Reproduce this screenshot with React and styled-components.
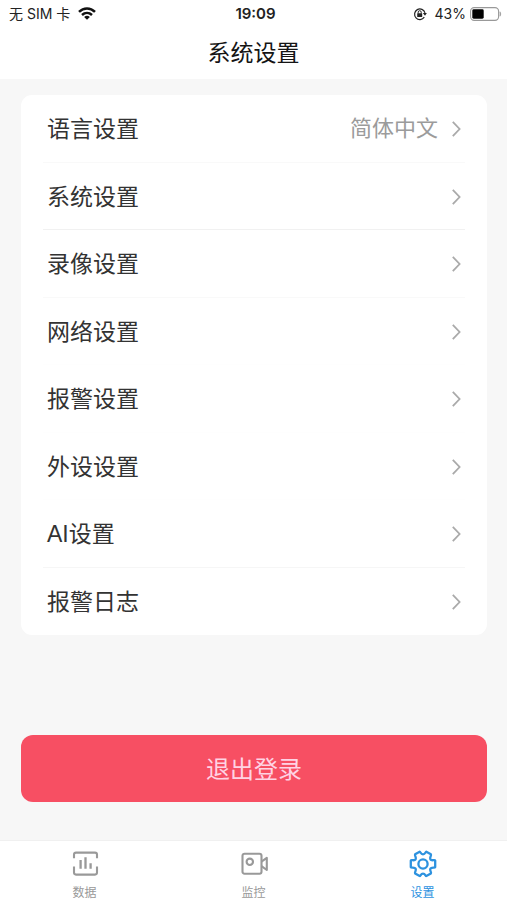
import React from "react";
import styled, { createGlobalStyle } from "styled-components";

const Global = createGlobalStyle`
  *, *::before, *::after { box-sizing: border-box; }
  body {
    margin: 0;
    background: #f7f7f7;
    font-family: Inter, "Noto Sans CJK SC", sans-serif;
    color: #333;
  }
  button, a { font: inherit; color: inherit; }
`;

const Screen = styled.div`
  display: flex;
  flex-direction: column;
  min-height: 100vh;
`;

const Header = styled.header`
  background: #fff;
`;

const StatusBar = styled.div`
  display: grid;
  grid-template-columns: 1fr auto 1fr;
  align-items: center;
  height: 27px;
  padding: 0 5px 0 9px;
  font-size: 14px;
  line-height: 20px;
  color: #222;
`;

const StatusGroup = styled.div`
  display: flex;
  align-items: center;
  justify-content: ${(p) => (p.$end ? "flex-end" : "flex-start")};
  gap: ${(p) => (p.$end ? "4px" : "8px")};
`;

const Clock = styled.time`
  font-size: 15px;
  font-weight: 600;
`;

const LockIcon = styled.svg`
  margin-right: 4px;
`;

const Title = styled.h1`
  margin: 0;
  height: 52px;
  font-size: 23px;
  font-weight: 400;
  line-height: 52px;
  text-align: center;
  color: #151515;
`;

const Main = styled.main`
  flex: 1;
  display: flex;
  flex-direction: column;
  padding: 16px 20px 38px 21px;
`;

const Card = styled.ul`
  display: grid;
  grid-auto-rows: 1fr;
  min-height: 540px;
  margin: 0;
  padding: 0 22px;
  list-style: none;
  background: #fff;
  border-radius: 11px;
`;

const Item = styled.li`
  display: flex;
  border-bottom: 1px solid ${(p) => p.$line};
`;

const Row = styled.button`
  flex: 1;
  display: flex;
  align-items: center;
  gap: 14px;
  padding: 2px 4px 0;
  border: 0;
  background: none;
  font-family: "Liberation Sans", "Noto Sans CJK SC", sans-serif;
  font-size: 23px;
  line-height: 32px;
  text-align: left;
  cursor: pointer;
`;

const RowLabel = styled.span`
  flex: 1;
`;

const RowValue = styled.span`
  font-size: 22px;
  color: #9b9b9b;
`;

const Logout = styled.button`
  height: 67px;
  margin-top: auto;
  padding: 2px 0 0;
  border: 0;
  border-radius: 12px;
  background: #f74f63;
  color: #ffd3e4;
  font-size: 24px;
  line-height: 32px;
  cursor: pointer;
`;

const TabBar = styled.nav`
  display: grid;
  grid-template-columns: repeat(3, 1fr);
  height: 60px;
  background: #fff;
  border-top: 1px solid #f0f0f0;
`;

const Tab = styled.a`
  display: flex;
  flex-direction: column;
  align-items: center;
  gap: 6px;
  padding-top: 8px;
  font-size: 12px;
  line-height: 16px;
  text-decoration: none;
  && { color: ${(p) => (p.$active ? "#2d92df" : "#999")}; }
`;

const rows = [
  { label: "语言设置", value: "简体中文", line: "#f9f9f9" },
  { label: "系统设置", line: "#f1f1f1" },
  { label: "录像设置", line: "#f9f9f9" },
  { label: "网络设置", line: "#fefefe" },
  { label: "报警设置", line: "#fefefe" },
  { label: "外设设置", line: "#fefefe" },
  { label: "AI设置", line: "#f6f6f6" },
  { label: "报警日志", line: "transparent" },
];

const Chevron = () => (
  <svg width="9" height="16" viewBox="0 0 9 16" fill="none" stroke="#aaa" strokeWidth="1.8" aria-hidden="true">
    <path d="M.8 .8 7.6 8 .8 15.2" />
  </svg>
);

const Wifi = () => (
  <svg width="18" height="13" viewBox="0 0 18 13" role="img" aria-label="Wi-Fi">
    <g fill="none" stroke="#111" strokeWidth="2.5">
      <path d="M1 4.9C5.6.3 12.4.3 17 4.9" />
      <path d="M4 8c2.9-2.7 7.1-2.7 10 0" />
    </g>
    <path d="M6.1 10q2.9-2.3 5.8 0L9 12.8Z" fill="#111" />
  </svg>
);

const RotationLock = () => (
  <LockIcon width="14" height="14" viewBox="0 0 14 14" role="img" aria-label="方向锁定">
    <path d="M11.3 10.2A5.3 5.3 0 1 1 12 5.8" fill="none" stroke="#222" strokeWidth="1.2" />
    <path d="M9.8 6h4.1L12 8.8Z" fill="#222" />
    <rect x="4.2" y="6.2" width="5" height="3.8" rx=".5" fill="#222" />
    <path d="M5.2 6.5V5.2a1.5 1.5 0 0 1 3 0v1.3" fill="none" stroke="#222" />
  </LockIcon>
);

const Battery = () => (
  <svg width="32" height="14" viewBox="0 0 32 14" role="img" aria-label="电量">
    <rect x=".6" y=".6" width="28" height="12.8" rx="3.6" fill="#fff" stroke="#999" strokeWidth="1.1" />
    <rect x="2.3" y="2.3" width="11.4" height="9.4" rx="1.4" fill="#000" />
    <path d="M30 4.8q1.6 2.2 0 4.4Z" fill="#999" stroke="#999" strokeWidth=".6" />
  </svg>
);

const TabIcon = ({ children }) => (
  <svg width="30" height="30" viewBox="0 0 30 30" fill="none" stroke="currentColor" strokeWidth="2.1" aria-hidden="true">
    {children}
  </svg>
);

const DataIcon = () => (
  <TabIcon>
    <path d="M4 9.2V5.6q0-2 2-2h19q2 0 2 2v3.6M4 17.6v6q0 2 2 2h19q2 0 2-2v-6" />
    <path d="M10.6 11v8.8M15.5 8.3v11.5M20.6 14.3v5.5" strokeWidth="2.3" />
  </TabIcon>
);

const CameraIcon = () => (
  <TabIcon>
    <rect x="3.5" y="4.7" width="19" height="20" rx="2" />
    <circle cx="10.8" cy="12.8" r="3.2" />
    <path d="M22.5 12.6 27.8 8.8v12.2l-5.3-3.8" strokeLinejoin="round" />
  </TabIcon>
);

const GearIcon = () => (
  <TabIcon>
    <path
      d="M11.7 2.7C12.5 2.8 12.7 5.3 15 5.3S17.5 2.8 18.3 2.7L22.9 5.3C23.7 6.5 21.3 8.4 22.4 10.4C23.5 12.3 26.8 10.3 27.2 11.5V18.1C26.8 19.3 23.5 17.6 22.4 19.6C21.3 21.6 23.7 23.2 22.9 24.4L18.3 27C17.5 27.2 17.3 24.6 15 24.6S12.5 27.2 11.7 27L7.1 24.4C6.3 23.2 8.7 21.6 7.6 19.6C6.5 17.6 3.2 19.3 2.8 18.1V11.5C3.2 10.3 6.5 12.3 7.6 10.4C8.7 8.4 6.3 6.5 7.1 5.3Z"
      strokeWidth="2.3"
      strokeLinejoin="round"
    />
    <circle cx="15" cy="15" r="4.6" strokeWidth="2.3" />
  </TabIcon>
);

const tabs = [
  { label: "数据", Icon: DataIcon },
  { label: "监控", Icon: CameraIcon },
  { label: "设置", Icon: GearIcon, active: true },
];

export default function App() {
  return (
    <Screen>
      <Global />
      <Header>
        <StatusBar>
          <StatusGroup>
            <span>无 SIM 卡</span>
            <Wifi />
          </StatusGroup>
          <Clock>19:09</Clock>
          <StatusGroup $end>
            <RotationLock />
            <span>43%</span>
            <Battery />
          </StatusGroup>
        </StatusBar>
        <Title>系统设置</Title>
      </Header>
      <Main>
        <Card>
          {rows.map((row) => (
            <Item key={row.label} $line={row.line}>
              <Row type="button">
                <RowLabel>{row.label}</RowLabel>
                {row.value && <RowValue>{row.value}</RowValue>}
                <Chevron />
              </Row>
            </Item>
          ))}
        </Card>
        <Logout type="button">退出登录</Logout>
      </Main>
      <TabBar>
        {tabs.map(({ label, Icon, active }) => (
          <Tab key={label} href="#" $active={active} aria-current={active ? "page" : undefined}>
            <Icon />
            {label}
          </Tab>
        ))}
      </TabBar>
    </Screen>
  );
}
